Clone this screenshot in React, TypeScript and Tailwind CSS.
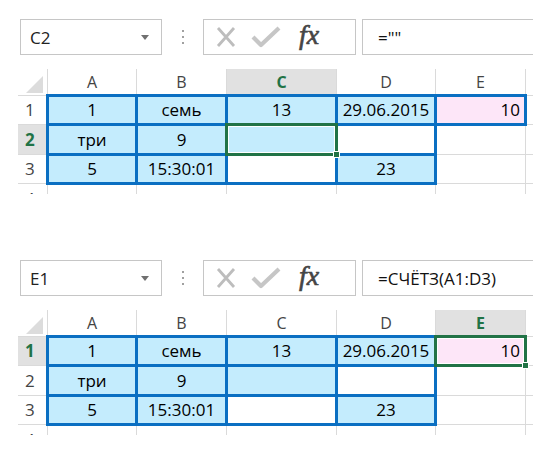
import React from 'react';

type Fill = 'blue' | 'pink' | 'none';
type CellData = { v: string; fill: Fill; right?: boolean; boxed: boolean };

const COLS = [
  { key: 'A', w: 'w-[89px]' },
  { key: 'B', w: 'w-[90px]' },
  { key: 'C', w: 'w-[110px]' },
  { key: 'D', w: 'w-[99px]' },
  { key: 'E', w: 'w-[90px]' },
];

const ROW_H = ['h-[29px]', 'h-[30px]', 'h-[29px]'];

// same data in both shots
const DATA: CellData[][] = [
  [
    { v: '1', fill: 'blue', boxed: true },
    { v: 'семь', fill: 'blue', boxed: true },
    { v: '13', fill: 'blue', boxed: true },
    { v: '29.06.2015', fill: 'blue', boxed: true },
    { v: '10', fill: 'pink', right: true, boxed: true },
  ],
  [
    { v: 'три', fill: 'blue', boxed: true },
    { v: '9', fill: 'blue', boxed: true },
    { v: '', fill: 'blue', boxed: true },
    { v: '', fill: 'none', boxed: true },
    { v: '', fill: 'none', boxed: false },
  ],
  [
    { v: '5', fill: 'blue', boxed: true },
    { v: '15:30:01', fill: 'blue', boxed: true },
    { v: '', fill: 'none', boxed: true },
    { v: '23', fill: 'blue', boxed: true },
    { v: '', fill: 'none', boxed: false },
  ],
];

const cellFont = { fontFamily: '"Open Sans", "Noto Sans", sans-serif' };

const Toolbar: React.FC<{ name: string; formula: string }> = ({ name, formula }) => (
  <div className="flex h-[36px] pl-[20px]" style={cellFont}>
    <div className="w-[142px] h-full border border-[#c6c6c6] bg-white flex items-center justify-between pl-[9px] pr-[12px]">
      <span className="text-[17px] text-[#222] leading-none">{name}</span>
      <span className="w-0 h-0 border-x-[4px] border-x-transparent border-t-[5px] border-t-[#707070]" />
    </div>
    <div className="w-[41px] flex flex-col items-center justify-center gap-[4px]">
      <span className="w-[2px] h-[2px] bg-[#a0a0a0]" />
      <span className="w-[2px] h-[2px] bg-[#a0a0a0]" />
      <span className="w-[2px] h-[2px] bg-[#a0a0a0]" />
    </div>
    <div className="w-[153px] h-full border border-[#c6c6c6] bg-white flex items-center">
      <svg width="20" height="22" viewBox="0 0 20 22" className="ml-[12px]">
        <path d="M2 2 L18 20 M18 2 L2 20" stroke="#bdbdbd" strokeWidth="2.8" fill="none" />
      </svg>
      <svg width="30" height="22" viewBox="0 0 30 22" className="ml-[15px]">
        <path d="M2 11 L10 19 L28 2" stroke="#c6c6c6" strokeWidth="4.2" fill="none" strokeLinejoin="round" />
      </svg>
      <span
        className="ml-[18px] text-[28px] italic text-[#454545] leading-none -mt-[4px]"
        style={{ fontFamily: '"Liberation Serif", "DejaVu Serif", serif', WebkitTextStroke: '0.6px #454545' }}
      >
        fx
      </span>
    </div>
    <div className="ml-[6px] w-[171px] h-full border-y border-l border-[#c6c6c6] bg-white flex items-center pl-[15px]">
      <span className="text-[17px] text-[#111] leading-none">{formula}</span>
    </div>
  </div>
);

const Sheet: React.FC<{ activeCol: number; activeRow: number }> = ({ activeCol, activeRow }) => (
  <div className="mt-[14px] ml-[18px] flex flex-col" style={cellFont}>
    {/* column headers */}
    <div className="flex h-[27px]">
      <div className="w-[30px] h-full border-r border-b border-[#dadada] flex items-end justify-end pr-[4px] pb-[2px]">
        <span className="w-0 h-0 border-l-[17px] border-l-transparent border-b-[17px] border-b-[#dcdcdc]" />
      </div>
      {COLS.map((c, i) =>
        i === activeCol ? (
          <div
            key={c.key}
            className={`${c.w} h-full border-r border-[#dadada] border-b-2 border-b-[#217346] bg-[#e1e1e1] flex items-center justify-center text-[16px] font-bold text-[#217346]`}
          >
            {c.key}
          </div>
        ) : (
          <div
            key={c.key}
            className={`${c.w} h-full border-r border-b border-[#dadada] flex items-center justify-center text-[16px] text-[#444]`}
          >
            {c.key}
          </div>
        )
      )}
      <div className="w-[7px] h-full border-b border-[#dadada]" />
    </div>

    {DATA.map((row, r) => (
      <div key={r} className={`flex ${ROW_H[r]}`}>
        {r === activeRow ? (
          <div className="w-[30px] h-full border-r-2 border-r-[#217346] border-b border-b-[#dadada] bg-[#e1e1e1] flex items-center pl-[7px] text-[17px] font-bold text-[#217346]">
            {r + 1}
          </div>
        ) : (
          <div className="w-[30px] h-full border-r border-b border-[#dadada] flex items-center pl-[7px] text-[17px] text-[#444]">
            {r + 1}
          </div>
        )}
        {row.map((cell, c) => (
          <div
            key={c}
            className={`relative ${COLS[c].w} h-full border-r border-b border-[#dadada] flex items-center text-[17px] text-black ${
              cell.right ? 'justify-end pr-[5px]' : 'justify-center'
            } ${cell.fill === 'blue' ? 'bg-[#c4ecfd]' : cell.fill === 'pink' ? 'bg-[#fde6f8]' : 'bg-white'}`}
          >
            <span className="relative z-30">{cell.v}</span>
            {cell.boxed && (
              <div className="absolute -inset-[2px] border-[3px] border-[#0a6fc2] z-10 pointer-events-none" />
            )}
            {r === activeRow && c === activeCol && (
              <div className="absolute -inset-[2px] border-[3px] border-[#217346] z-20 pointer-events-none shadow-[inset_0_0_0_1px_white]">
                <div className="absolute -right-[5px] -bottom-[5px] w-[7px] h-[7px] bg-[#217346] border border-white" />
              </div>
            )}
          </div>
        ))}
        <div className="w-[7px] h-full border-b border-[#dadada]" />
      </div>
    ))}

    {/* row 4, cut off at the bottom of the shot */}
    <div className="flex h-[10px] overflow-hidden">
      <div className="w-[30px] border-r border-[#dadada]">
        <div className="h-[29px] flex items-center pl-[7px] text-[17px] text-[#444]">4</div>
      </div>
      {COLS.map((c) => (
        <div key={c.key} className={`${c.w} h-full border-r border-[#dadada]`} />
      ))}
    </div>
  </div>
);

export default function App() {
  return (
    <div className="w-[556px] h-[460px] bg-white overflow-hidden pt-[19px]">
      <Toolbar name="C2" formula={'=""'} />
      <Sheet activeCol={2} activeRow={1} />
      <div className="mt-[66px]">
        <Toolbar name="E1" formula="=СЧЁТЗ(A1:D3)" />
        <Sheet activeCol={4} activeRow={0} />
      </div>
    </div>
  );
}
